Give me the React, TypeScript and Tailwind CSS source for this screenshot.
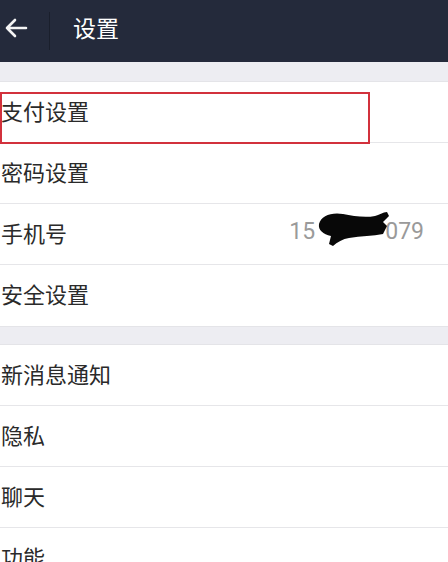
import React from "react";

const font = {
  fontFamily: '"Noto Sans CJK SC", "Noto Sans", sans-serif',
};

const Row = ({
  label,
  children,
  last,
}: {
  label: string;
  children?: React.ReactNode;
  last?: boolean;
}) => (
  <div
    className={
      "flex h-[61px] items-center justify-between bg-white pb-[5px] pl-[1px] pr-[24px] " +
      (last ? "" : "border-b border-[#e6e6e9]")
    }
  >
    <span className="text-[22px] leading-none text-[#2a2a2a]">{label}</span>
    {children}
  </div>
);

const App = () => {
  return (
    <div className="h-[562px] w-[448px] overflow-hidden bg-[#ededf2]" style={font}>
      <div className="flex h-[62px] items-center bg-[#242a3b] pb-[7px]">
        <div className="flex w-[49px] items-center justify-start pl-[4px]">
          <svg width="24" height="20" viewBox="0 0 24 20" fill="none">
            <path
              d="M22 10H3M11 2L3 10l8 8"
              stroke="#f4f4f4"
              strokeWidth="2.6"
              strokeLinecap="round"
              strokeLinejoin="round"
            />
          </svg>
        </div>
        <div className="mt-[7px] h-[38px] w-[1px] bg-[#1a1f2c]" />
        <span className="pl-[23px] text-[23px] leading-none text-white">设置</span>
      </div>

      <div className="h-[20px] border-b border-[#e4e4e8]" />

      <div className="relative">
        <Row label="支付设置" />
        <Row label="密码设置" />
        <Row label="手机号">
          <div
            className="relative flex items-center text-[23px] leading-none text-[#9a9a9a]"
            style={{ fontFamily: "Roboto, sans-serif" }}
          >
            <span>15</span>
            <span className="w-[70px]" />
            <span>079</span>
            <svg
              className="absolute left-[26px] top-[-10px]"
              width="76"
              height="38"
              viewBox="0 0 76 38"
            >
              <path
                d="M4 14C6 6 16 2 28 4c10 2 22 4 32 2 4-1 8-4 12-4l2 4-6 6 4 4-4 8c-10 2-22 2-34 4-6 1-12 4-16 8l-4-2 2-8C8 24 3 20 4 14z"
                fill="#080808"
              />
            </svg>
          </div>
        </Row>
        <Row label="安全设置" last />
        <div className="pointer-events-none absolute left-0 top-[10px] h-[52px] w-[370px] border-2 border-[#d2313c]" />
      </div>

      <div className="h-[19px] border-y border-[#e4e4e8]" />

      <Row label="新消息通知" />
      <Row label="隐私" />
      <Row label="聊天" />
      <Row label="功能" last />
    </div>
  );
};

export default App;
